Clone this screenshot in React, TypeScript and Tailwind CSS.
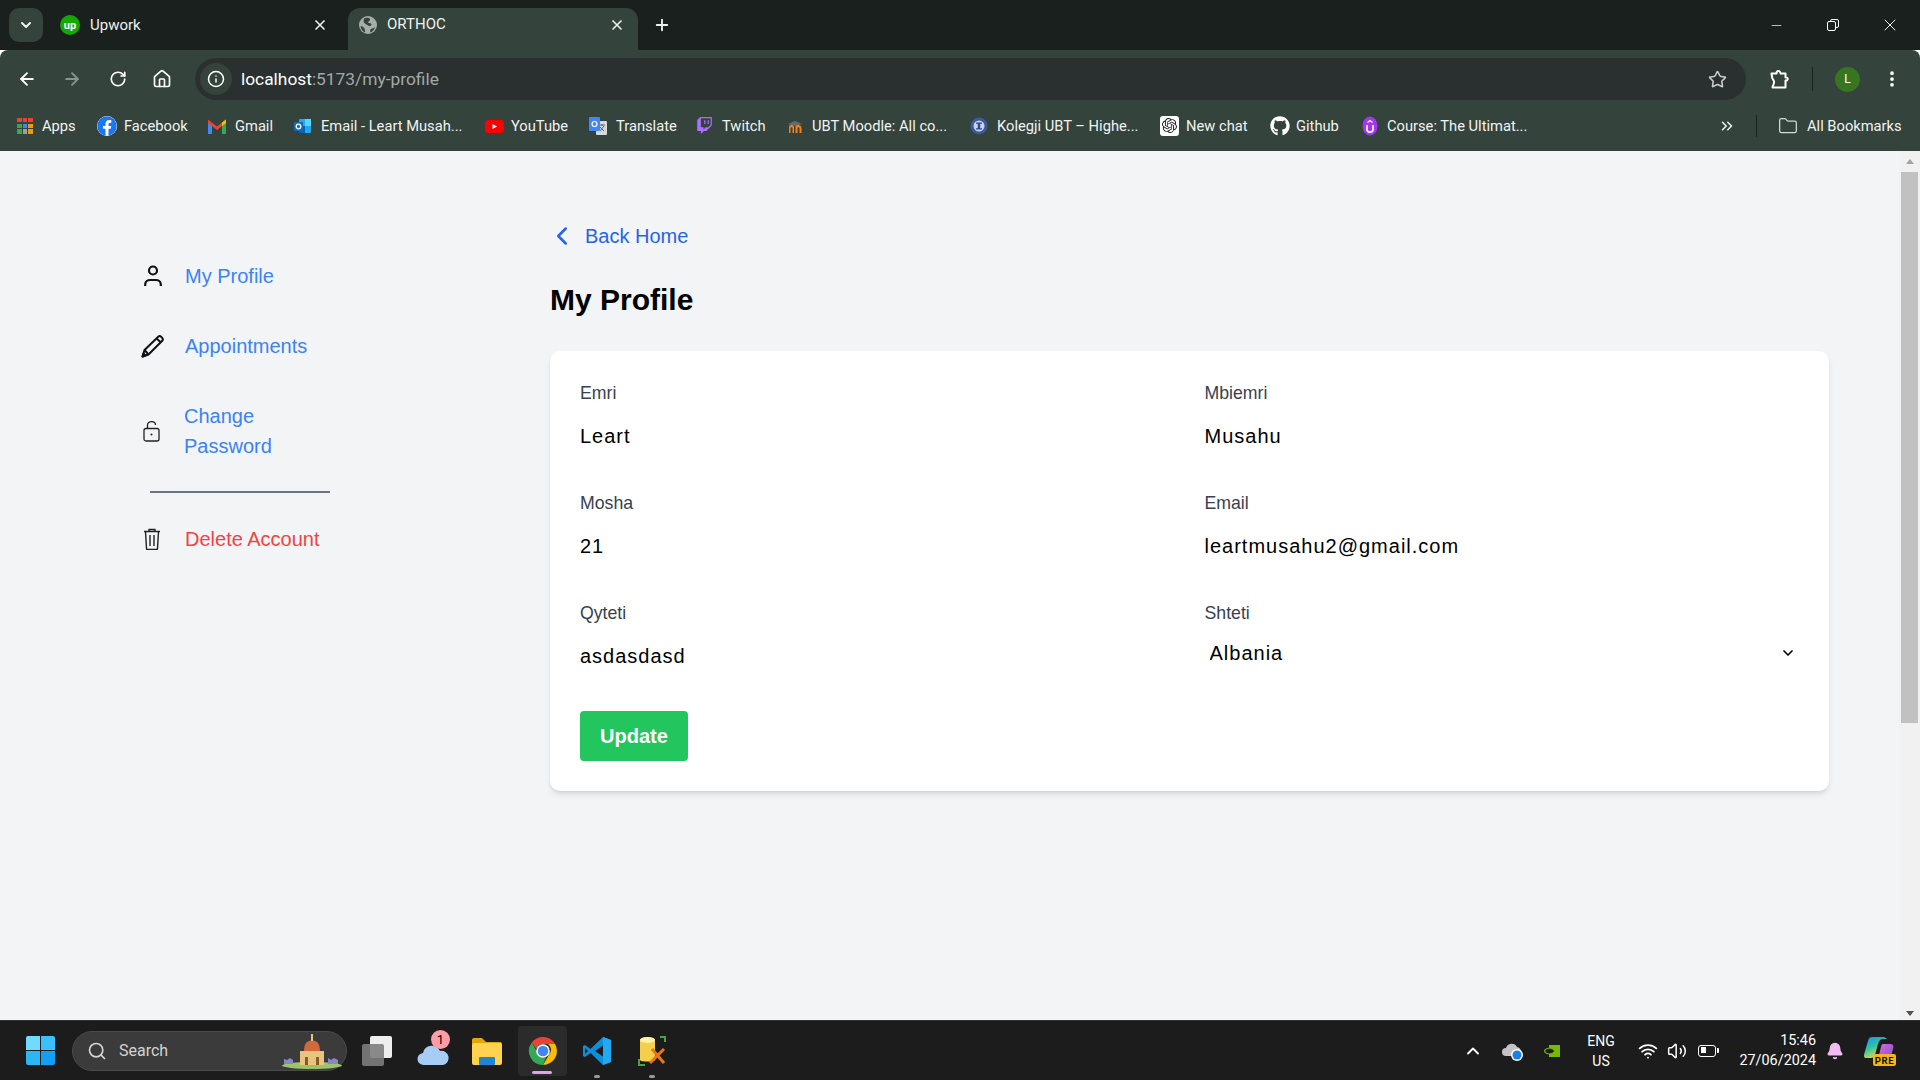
import {
  ArrowLeft,
  ArrowRight,
  Bell,
  ChevronDown,
  ChevronLeft,
  ChevronUp,
  ChevronsRight,
  EllipsisVertical,
  Folder,
  House,
  Info,
  Minus,
  Plus,
  RotateCw,
  Search,
  Star,
  Volume2,
  Wifi,
  X,
} from "lucide-react";
import { FaFacebook, FaGithub } from "react-icons/fa";
import { SiOpenai, SiTwitch } from "react-icons/si";

function AppsIcon() {
  const colors = ["#ea4335", "#ea4335", "#ea4335", "#34a853", "#4285f4", "#f29900", "#34a853", "#9aa0a6", "#f29900"];
  return (
    <div className="grid h-[16px] w-[16px] grid-cols-3 gap-[1.2px]">
      {colors.map((c, i) => (
        <div key={i} className="h-[4.500px] w-[4.500px]" style={{ backgroundColor: c }} />
      ))}
    </div>
  );
}

function GmailIcon() {
  return (
    <svg width="18" height="16" viewBox="0 0 18 16" className="ml-[-1px]">
      <path d="M0 3v13h4V7z" fill="#4285f4" />
      <path d="M18 3v13h-4V7z" fill="#34a853" />
      <path d="M0 1.500 9 8.500l9-7V5L9 12 0 5z" fill="#ea4335" />
      <path d="M14 4.600 18 1.500V5l-4 3z" fill="#fbbc04" />
    </svg>
  );
}

function OutlookIcon() {
  return (
    <svg width="18" height="16" viewBox="0 0 18 16">
      <rect x="5" y="1" width="12" height="14" rx="1" fill="#28a8ea" />
      <rect x="11" y="1" width="6" height="7" fill="#50d9ff" />
      <rect x="5" y="8" width="6" height="7" fill="#0364b8" />
      <rect x="0" y="4" width="9" height="9" rx="1" fill="#0f6cbd" />
      <circle cx="4.500" cy="8.500" r="2.300" fill="none" stroke="#fff" strokeWidth="1.300" />
    </svg>
  );
}

function YoutubeIcon() {
  return (
    <svg width="19" height="16" viewBox="0 0 19 16">
      <rect x="0" y="2" width="19" height="13" rx="3.500" fill="#f00" />
      <path d="M7.500 6v5l4.500-2.500z" fill="#fff" />
    </svg>
  );
}

function TranslateIcon() {
  return (
    <svg width="20" height="20" viewBox="0 0 20 20">
      <rect x="8" y="5" width="11" height="14" rx="1" fill="#d5d8dc" />
      <path d="M11 9h6M14 8v2M12 15l4-5M12 11l4 4" stroke="#5f6368" strokeWidth="1" fill="none" />
      <rect x="1" y="1" width="11" height="14" rx="1" fill="#4285f4" />
      <circle cx="6.500" cy="8" r="2.500" fill="none" stroke="#fff" strokeWidth="1.200" />
    </svg>
  );
}

function MoodleIcon() {
  return (
    <svg width="18" height="16" viewBox="0 0 18 16">
      <path d="M2 6 9 3l7 3-7 2z" fill="#6b6b6b" />
      <path d="M3 15V9c0-2 2-2 3-2s2 1 2 2v6H6.500V10c0-1-2-1-2 0v5zM9.500 15V9c0-2 2-2 3-2s3 1 3 3v5h-2v-5c0-1-2-1-2 0v5z" fill="#f98012" />
    </svg>
  );
}

function KolegjiIcon() {
  return (
    <svg width="18" height="18" viewBox="0 0 18 18">
      <circle cx="9" cy="9" r="8.500" fill="#3c5a9a" />
      <circle cx="9" cy="9" r="5.500" fill="#c7d2e8" />
      <path d="M6 5.500h6v1.300h-1.800v4.400H12v1.300H6v-1.300h1.800V6.800H6z" fill="#2c4a8a" />
    </svg>
  );
}

function CourseIcon() {
  return (
    <svg width="16" height="20" viewBox="0 0 16 20">
      <ellipse cx="8" cy="10" rx="7.500" ry="9.500" fill="#a435f0" />
      <path d="M5 9v4.500c0 3.500 6 3.500 6 0V9" fill="none" stroke="#fff" strokeWidth="1.600" />
      <path d="m5.500 6.500 2.500-2 2.500 2" fill="none" stroke="#fff" strokeWidth="1.300" />
    </svg>
  );
}

function GlobeFilled() {
  return (
    <svg width="18" height="18" viewBox="0 0 18 18">
      <circle cx="9" cy="9" r="9" fill="#a6aeaa" />
      <path d="M5 2.500c2-1 5-1 6 .5 .5 1.500-1.500 2-2 3.500 1 1 3 0 3.500 2-.5 2-3 2-4 .5-1.500-.5-3.500-2-4-3.500z" fill="#34433c" />
      <path d="M1.500 10c2 0 3 1 4 2.500 0 1.500 1 2 .5 4-2.500-1-4-3.500-4.500-6.500zM12 13c1.500-.5 3-1 4-2-.5 2.500-2 4.500-4.500 5.500-.5-1.500-.5-2.500.5-3.500z" fill="#34433c" />
    </svg>
  );
}

function ExtensionIcon() {
  return (
    <svg width="22" height="22" viewBox="0 0 22 22" fill="none" stroke="#fff" strokeWidth="2" strokeLinejoin="round" className="ml-[23px]">
      <path d="M2.500 5.500H7.500C7 2.500 11.500 2 11.500 5.500H16.500V9.500C19.500 9 19.500 13 16.500 12.500V19.500H3.500C3.500 17.500 5.500 16 5 13.500 4.800 11.500 3 11 3 9z" />
    </svg>
  );
}

const bookmarks = [
  { label: "Apps", width: "w-[80px]", gap: "gap-[9px]", icon: <AppsIcon /> },
  { label: "Facebook", width: "w-[112px]", gap: "gap-[7px]", icon: <FaFacebook size={20} color="#1877f2" className="rounded-full bg-white" /> },
  { label: "Gmail", width: "w-[85px]", gap: "gap-[9px]", icon: <GmailIcon /> },
  { label: "Email - Leart Musah...", width: "w-[191px]", gap: "gap-[9px]", icon: <OutlookIcon /> },
  { label: "YouTube", width: "w-[103px]", gap: "gap-[7px]", icon: <YoutubeIcon /> },
  { label: "Translate", width: "w-[108px]", gap: "gap-[8px]", icon: <TranslateIcon /> },
  { label: "Twitch", width: "w-[90px]", gap: "gap-[9px]", icon: <SiTwitch size={17} color="#a970ff" /> },
  { label: "UBT Moodle: All co...", width: "w-[184px]", gap: "gap-[8px]", icon: <MoodleIcon /> },
  { label: "Kolegji UBT – Highe...", width: "w-[190px]", gap: "gap-[9px]", icon: <KolegjiIcon /> },
  {
    label: "New chat",
    width: "w-[110px]",
    gap: "gap-[7px]",
    icon: (
      <span className="flex h-[20px] w-[19px] items-center justify-center rounded-[3px] bg-white">
        <SiOpenai size={15} color="#222" />
      </span>
    ),
  },
  { label: "Github", width: "w-[92px]", gap: "gap-[6px]", icon: <FaGithub size={20} color="#fff" /> },
  { label: "Course: The Ultimat...", width: "w-[357px]", gap: "gap-[9px]", icon: <CourseIcon /> },
];

function TabStrip() {
  return (
    <div className="flex h-[50px] shrink-0 items-end bg-[#1a201e] text-[15px] text-[#eef1ef]">
      <div className="mb-[8px] ml-[9px] flex h-[34px] w-[34px] items-center justify-center rounded-[10px] bg-[#34433c]">
        <ChevronDown size={16} strokeWidth={3} />
      </div>
      <div className="mb-[8px] flex h-[34px] w-[305px] items-center pl-[17px] pr-[20px]">
        <span className="flex h-[20px] w-[20px] items-center justify-center rounded-full bg-[#14a800] text-[11px] font-bold leading-none text-white">
          up
        </span>
        <span className="ml-[10px] flex-1">Upwork</span>
        <X size={16} strokeWidth={2.5} />
      </div>
      <div className="flex h-[42px] w-[290px] items-center rounded-t-[12px] bg-[#34433c] pb-[9px] pl-[11px] pr-[13px]">
        <GlobeFilled />
        <span className="ml-[10px] flex-1">ORTHOC</span>
        <X size={16} strokeWidth={2.5} />
      </div>
      <div className="mb-[8px] ml-[15px] flex h-[34px] items-center">
        <Plus size={18} strokeWidth={2.5} />
      </div>
      <div className="mb-[12px] ml-auto flex h-[26px] items-center pr-[20px]">
        <Minus size={15} strokeWidth={1.2} />
        <div className="relative ml-[43px] h-[12px] w-[12px]">
          <div className="absolute left-[3px] top-0 h-[9px] w-[9px] rounded-[2px] border border-white" />
          <div className="absolute bottom-0 left-0 h-[10px] w-[9px] rounded-[2px] border border-white bg-[#1a201e]" />
        </div>
        <X size={20} strokeWidth={1.2} className="ml-[41px]" />
      </div>
    </div>
  );
}

function Toolbar() {
  return (
    <div className="flex h-[58px] shrink-0 items-center rounded-t-[8px] bg-[#34433c] text-white">
      <ArrowLeft size={20} strokeWidth={2.2} className="ml-[17px]" />
      <ArrowRight size={20} strokeWidth={2.2} color="#8a9590" className="ml-[25px]" />
      <RotateCw size={18} strokeWidth={2.2} className="ml-[27px]" />
      <House size={20} strokeWidth={2} className="ml-[25px]" />
      <div className="ml-[23px] flex h-[42px] w-[1551px] items-center rounded-full bg-[#2a302f] pl-[5px] pr-[19px]">
        <div className="flex h-[32px] w-[32px] items-center justify-center rounded-full bg-[#34433c]">
          <Info size={18} strokeWidth={2} />
        </div>
        <span className="ml-[9px] flex-1 pt-[1px] text-[17.35px]">
          localhost<span className="text-[#a3a9a6]">:5173/my-profile</span>
        </span>
        <Star size={19} strokeWidth={2} color="#c9cdcb" />
      </div>
      <ExtensionIcon />
      <div className="ml-[21px] h-[24px] w-[1px] bg-[#1a201e]" />
      <div className="ml-[22px] flex h-[25px] w-[25px] items-center justify-center rounded-full bg-[#37761f] text-[12px] text-white">
        L
      </div>
      <EllipsisVertical size={20} strokeWidth={2.5} className="ml-[22px]" />
    </div>
  );
}

function BookmarkBar() {
  return (
    <div className="flex h-[43px] shrink-0 items-center bg-[#34433c] pb-[7px] pl-[17px] text-[14.7px] text-[#f1f3f2]">
      {bookmarks.map((b) => (
        <div key={b.label} className={`flex shrink-0 items-center ${b.gap} ${b.width}`}>
          {b.icon}
          <span className="whitespace-nowrap">{b.label}</span>
        </div>
      ))}
      <ChevronsRight size={18} strokeWidth={2} className="ml-[-1px]" />
      <div className="ml-[20px] h-[22px] w-[1px] bg-[#1a201e]" />
      <Folder size={20} strokeWidth={1.5} color="#d5d9d7" className="ml-[21px]" />
      <span className="ml-[9px] whitespace-nowrap">All Bookmarks</span>
    </div>
  );
}

function PersonIcon() {
  return (
    <svg width="18" height="22" viewBox="0 0 18 22" fill="none" stroke="#111" strokeWidth="2.200">
      <circle cx="9" cy="5.500" r="4" />
      <path d="M1.200 21v-1.500c0-3 2.500-4.500 5-4.500h5.600c2.500 0 5 1.500 5 4.500V21" />
    </svg>
  );
}

function PenIcon() {
  return (
    <svg width="24" height="24" viewBox="0 0 24 24" fill="none" stroke="#111" strokeWidth="2" strokeLinejoin="round" className="ml-[-1px]">
      <path d="M1.500 22.500 3.500 16 17.500 2.500c1.500-1.500 5.500 2 4 4L7.500 20.500z" />
      <path d="m15.500 4.500 4.500 4" />
      <path d="m3.500 16 4 4.500" />
      <path d="m1.500 22.500 3-1-2-2z" fill="#111" />
    </svg>
  );
}

function LockIcon() {
  return (
    <svg width="17" height="22" viewBox="0 0 17 22" fill="none" stroke="#222" strokeWidth="1.300" className="ml-[-1px]">
      <rect x="1" y="8.500" width="15" height="12.500" rx="2" />
      <path d="M4.500 8.500V5c0-4.500 8-4.500 8 0" />
      <circle cx="8.500" cy="14.500" r="1" fill="#222" stroke="none" />
    </svg>
  );
}

function TrashIcon() {
  return (
    <svg width="18" height="22" viewBox="0 0 18 22" fill="none" stroke="#222" strokeWidth="1.400" className="ml-[-1px]">
      <path d="M1 3.500h16M6 3.500V1.500h6v2" />
      <path d="M2.500 3.500 3.500 20.500c0 .5.500 1 1 1h9c.5 0 1-.5 1-1l1-17" />
      <path d="M7 7v11M11 7v11" />
    </svg>
  );
}

function Sidebar() {
  return (
    <aside className="w-[408px] shrink-0 pt-[110px] text-[20px] leading-[30px]">
      <div className="flex items-center">
        <div className="w-[43px] pl-[2px]">
          <PersonIcon />
        </div>
        <span className="text-[#3b82f6]">My Profile</span>
      </div>
      <div className="mt-[40px] flex items-center">
        <div className="w-[43px]">
          <PenIcon />
        </div>
        <span className="text-[#3b82f6]">Appointments</span>
      </div>
      <div className="mt-[40px] flex items-center">
        <div className="w-[42px] pl-[2px]">
          <LockIcon />
        </div>
        <span className="w-[120px] text-[#3b82f6]">Change Password</span>
      </div>
      <div className="ml-[8px] mt-[30px] h-[2px] w-[180px] bg-[#6b7280]" />
      <div className="mt-[31px] flex items-center">
        <div className="w-[43px] pl-[2px]">
          <TrashIcon />
        </div>
        <span className="text-[#ef4444]">Delete Account</span>
      </div>
    </aside>
  );
}

function Field({ label, value }: { label: string; value: string }) {
  return (
    <div>
      <label className="block text-[17.7px] leading-[24px] text-[#374151]">{label}</label>
      <input
        readOnly
        value={value}
        className="mt-[6px] block h-[50px] w-full bg-transparent text-[20px] tracking-[1px] text-black outline-none"
      />
    </div>
  );
}

function ProfileCard() {
  return (
    <div className="rounded-[10px] bg-white p-[30px] shadow-md">
      <div className="grid grid-cols-2 gap-x-[30px] gap-y-[30px]">
        <Field label="Emri" value="Leart" />
        <Field label="Mbiemri" value="Musahu" />
        <Field label="Mosha" value="21" />
        <Field label="Email" value="leartmusahu2@gmail.com" />
        <Field label="Qyteti" value="asdasdasd" />
        <div className="h-[74px]">
          <label className="block text-[17.7px] leading-[24px] text-[#374151]">Shteti</label>
          <div className="relative mt-[8px]">
            <select className="block h-[40px] w-full appearance-none bg-transparent pl-[5px] text-[20px] tracking-[1px] text-black outline-none">
              <option>Albania</option>
            </select>
            <ChevronDown size={16} strokeWidth={2.5} className="absolute right-[3px] top-[12px] text-black" />
          </div>
        </div>
      </div>
      <button className="mt-[30px] h-[50px] w-[108px] rounded-[4px] bg-[#22c55e] text-[20px] font-bold text-white">
        Update
      </button>
    </div>
  );
}

function Scrollbar() {
  return (
    <div className="flex w-[21px] shrink-0 flex-col items-center bg-[#f1f1f1]">
      <div className="mt-[8px] h-0 w-0 border-x-[4.500px] border-b-[5px] border-x-transparent border-b-[#a3a3a3]" />
      <div className="mt-[8px] h-[551px] w-[17px] bg-[#c1c1c1]" />
      <div className="mt-auto mb-[4px] h-0 w-0 border-x-[4.500px] border-t-[5px] border-x-transparent border-t-[#505050]" />
    </div>
  );
}

function WindowsLogo() {
  return (
    <div className="grid h-[29px] w-[29px] grid-cols-2 gap-[1px]">
      <div className="rounded-tl-[2px] bg-[#6fdcff]" />
      <div className="rounded-tr-[2px] bg-[#3cc0fb]" />
      <div className="rounded-bl-[2px] bg-[#2cb6f6]" />
      <div className="rounded-br-[2px] bg-[#12a0f2]" />
    </div>
  );
}

function Duomo() {
  return (
    <svg width="62" height="36" viewBox="0 0 62 36" className="ml-auto">
      <ellipse cx="31" cy="32.500" rx="30" ry="3.500" fill="#9cc46a" />
      <path d="M3 31v-5l3 1 3-2 3 2v4zM47 31v-6l3 2 3-2 4 2v4z" fill="#8b86c9" />
      <rect x="19" y="18" width="24" height="14" fill="#e8c57c" />
      <path d="M23 18c0-9 4-10 8-11 4 1 8 2 8 11z" fill="#d2693c" />
      <rect x="30" y="1" width="2" height="7" fill="#e8c57c" />
      <path d="M24 24h3v8h-3zM35 24h3v8h-3z" fill="#8a5a32" />
    </svg>
  );
}

function ChromeLogo() {
  return (
    <svg width="30" height="30" viewBox="0 0 30 30">
      <path d="M15 1a14 14 0 0 1 12.100 7H15a7 7 0 0 0-6.700 5L3.800 6.500A14 14 0 0 1 15 1z" fill="#ea4335" />
      <path d="M27.100 8A14 14 0 0 1 15 29l6-10.300A7 7 0 0 0 20 8z" fill="#fbbc04" />
      <path d="M3.800 6.500 9.500 16.500A7 7 0 0 0 18 21.300L15 29A14 14 0 0 1 3.800 6.500z" fill="#34a853" />
      <circle cx="15" cy="15" r="6.800" fill="#fff" />
      <circle cx="15" cy="15" r="5.300" fill="#4285f4" />
    </svg>
  );
}

function VsCodeLogo() {
  return (
    <svg width="30" height="30" viewBox="0 0 30 30">
      <path d="M21 1 8.500 13 3 9 1 10v10l2 1 5.500-4L21 29l8-3V4z" fill="#0e8fdc" />
      <path d="M21 1l8 3v22l-8 3z" fill="#23a9f2" />
      <path d="M21 9.500 13 15l8 5.500z" fill="#1c1c1c" />
      <path d="M3 12v6l3-3z" fill="#1c1c1c" />
    </svg>
  );
}

function ToolLogo() {
  return (
    <svg width="30" height="32" viewBox="0 0 30 32" fill="none">
      <path d="M3 5c0-4 15-4 15 0v20c0 2-15 2-15 0z" fill="#f5cf4a" />
      <ellipse cx="10.500" cy="5" rx="7.500" ry="3" fill="#fff2a8" />
      <path d="M23 2h5v5M2 24v6h6" stroke="#49a04a" strokeWidth="2" />
      <path d="m13 28 14-14M15 14l12 14" stroke="#e8761c" strokeWidth="3" />
    </svg>
  );
}

function CopilotLogo() {
  return (
    <svg width="32" height="30" viewBox="0 0 32 30" className="ml-[20px]">
      <defs>
        <linearGradient id="copilotLeft" x1="0" y1="0" x2="0.500" y2="1">
          <stop offset="0" stopColor="#1f8bf0" />
          <stop offset="0.500" stopColor="#2bc3a6" />
          <stop offset="1" stopColor="#e6d84a" />
        </linearGradient>
        <linearGradient id="copilotRight" x1="0" y1="0" x2="1" y2="1">
          <stop offset="0" stopColor="#e06ad0" />
          <stop offset="1" stopColor="#7a4fe0" />
        </linearGradient>
      </defs>
      <path d="M8 1h11c2 0 3 1 4 2l-4 0c-3 0-4 2-5 5l-3 11c-.5 2-2 3-4 3H2C0 22-.5 20 .5 17L4 5c.5-2.500 2-4 4-4z" fill="url(#copilotLeft)" />
      <path d="M19 8h7c3 0 4 2 3 5l-2 7c-.5 2-2 3-4 3H14l1-4 2-8c.4-2 1-3 2-3z" fill="url(#copilotRight)" />
      <rect x="9" y="18" width="23" height="12" rx="2" fill="#f4b41a" />
      <text x="20.500" y="27.500" textAnchor="middle" fontSize="9.500" fontWeight="700" fontFamily="Roboto, sans-serif" letterSpacing="0.600" fill="#111">
        PRE
      </text>
    </svg>
  );
}

function Taskbar() {
  return (
    <div className="flex h-[60px] shrink-0 items-center border-t border-[#2f2f2f] bg-[#1c1c1c] text-white">
      <div className="ml-[26px]">
        <WindowsLogo />
      </div>
      <div className="ml-[17px] flex h-[40px] w-[275px] items-center rounded-full border border-[#4a4a4a] bg-[#3b3b3b] pl-[14px] pr-[3px] text-[16px] text-[#d4d4d4]">
        <Search size={20} strokeWidth={2} />
        <span className="ml-[12px]">Search</span>
        <Duomo />
      </div>
      <div className="relative ml-[15px] h-[30px] w-[30px]">
        <div className="absolute right-0 top-0 h-[22px] w-[22px] rounded-[2px] bg-[#eeeeee]" />
        <div className="absolute bottom-0 left-0 h-[22px] w-[22px] rounded-[2px] bg-[#7d7d7d]/90" />
      </div>
      <div className="relative ml-[25px] h-[32px] w-[33px]">
        <svg width="33" height="24" viewBox="0 0 33 24" className="absolute bottom-0 left-0">
          <path d="M7 22a6 6 0 0 1-1-12 9 9 0 0 1 17-2 7 7 0 0 1 3 14z" fill="#a8cdf5" />
        </svg>
        <span className="absolute right-0 top-[-5px] flex h-[19px] w-[19px] items-center justify-center rounded-full bg-[#ff9da6] text-[13px] leading-none text-black">
          1
        </span>
      </div>
      <svg width="30" height="28" viewBox="0 0 30 28" className="ml-[22px]">
        <path d="M0 3a2 2 0 0 1 2-2h8l4 4h14a2 2 0 0 1 2 2v3H0z" fill="#e3a50c" />
        <rect x="0" y="6" width="30" height="22" rx="2" fill="#ffd34d" />
        <rect x="7" y="20" width="16" height="8" rx="1" fill="#1f86d6" />
      </svg>
      <div className="relative ml-[16px] flex h-[50px] w-[49px] items-center justify-center rounded-[4px] bg-[#2b2b2b]">
        <ChromeLogo />
        <div className="absolute bottom-[2px] left-[14px] h-[3px] w-[20px] rounded-full bg-[#dba6e6]" />
      </div>
      <div className="relative ml-[15px]">
        <VsCodeLogo />
        <div className="absolute bottom-[-12px] left-[12px] h-[3px] w-[6px] rounded-full bg-[#9a9a9a]" />
      </div>
      <div className="relative ml-[25px]">
        <ToolLogo />
        <div className="absolute bottom-[-11px] left-[12px] h-[3px] w-[6px] rounded-full bg-[#9a9a9a]" />
      </div>

      <div className="ml-auto flex items-center pr-[24px]">
        <ChevronUp size={20} strokeWidth={2.2} />
        <svg width="22" height="20" viewBox="0 0 22 20" className="ml-[19px]">
          <path d="M4 15a4 4 0 0 1 0-8 6 6 0 0 1 11-1 5 5 0 0 1 2 9z" fill="#c4c4c4" />
          <circle cx="15" cy="14" r="6" fill="#fff" />
          <circle cx="15" cy="14" r="4.500" fill="#1d7fe0" />
        </svg>
        <svg width="16" height="12" viewBox="0 0 16 12" className="ml-[20px]">
          <rect x="5" width="11" height="12" fill="#76b900" />
          <path d="M0 6c3-4 8-4 11 0-3 4-8 4-11 0z" fill="#1c1c1c" stroke="#76b900" strokeWidth="1.200" />
        </svg>
        <div className="ml-[26px] w-[30px] text-center text-[14px] leading-[20px]">
          ENG
          <br />
          US
        </div>
        <Wifi size={20} strokeWidth={2.2} className="ml-[22px]" />
        <Volume2 size={20} strokeWidth={1.8} className="ml-[9px]" />
        <div className="relative ml-[11px] h-[12px] w-[18px] rounded-[3px] border-[1.5px] border-white">
          <div className="m-[1.5px] h-[6px] w-[5px] bg-white" />
          <div className="absolute right-[-4px] top-[2px] h-[5px] w-[2px] rounded-r-[1px] bg-white" />
        </div>
        <div className="ml-[16px] w-[84px] text-right text-[14.4px] leading-[20px]">
          15:46
          <br />
          27/06/2024
        </div>
        <Bell size={18} fill="#f2bdf0" color="#f2bdf0" className="ml-[10px]" />
        <CopilotLogo />
      </div>
    </div>
  );
}

export default function App() {
  return (
    <div className="flex h-screen w-screen flex-col overflow-hidden font-['Roboto',sans-serif]">
      <TabStrip />
      <Toolbar />
      <BookmarkBar />
      <div className="flex min-h-0 flex-1">
        <div className="flex flex-1 bg-[#f3f4f6] pl-[142px] pr-[70px] font-['Liberation_Sans',Arial,sans-serif]">
          <Sidebar />
          <main className="min-w-0 flex-1 pt-[71px]">
            <a className="flex h-[28px] items-center text-[20px] leading-[28px] text-[#2563eb]">
              <ChevronLeft size={30} strokeWidth={2} className="ml-[-3px]" />
              <span className="ml-[8px]">Back Home</span>
            </a>
            <h1 className="mt-[32px] text-[30px] font-bold leading-[36px] text-black">My Profile</h1>
            <div className="mt-[33px]">
              <ProfileCard />
            </div>
          </main>
        </div>
        <Scrollbar />
      </div>
      <Taskbar />
    </div>
  );
}
